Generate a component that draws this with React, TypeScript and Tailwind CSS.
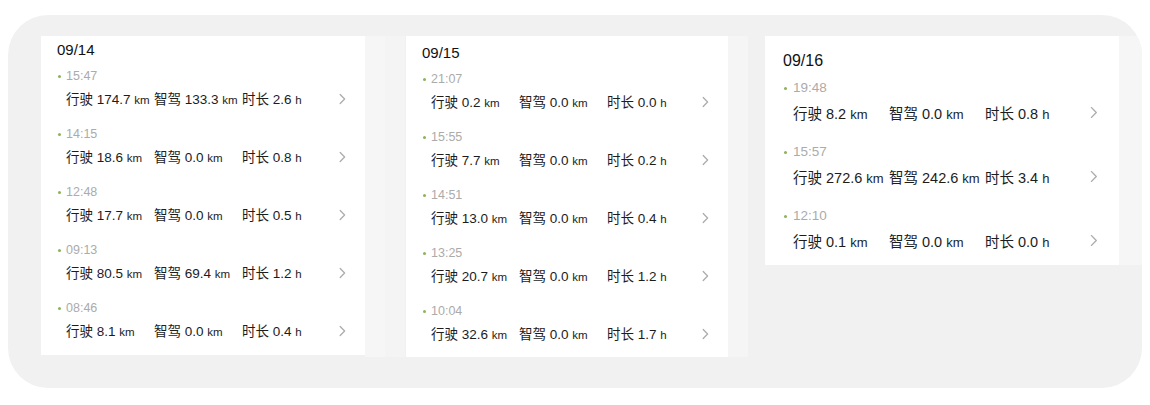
import React from "react";

type Trip = { t: string; d: string; s: string; h: string };

const day1: Trip[] = [
  { t: "15:47", d: "174.7", s: "133.3", h: "2.6" },
  { t: "14:15", d: "18.6", s: "0.0", h: "0.8" },
  { t: "12:48", d: "17.7", s: "0.0", h: "0.5" },
  { t: "09:13", d: "80.5", s: "69.4", h: "1.2" },
  { t: "08:46", d: "8.1", s: "0.0", h: "0.4" },
];
const day2: Trip[] = [
  { t: "21:07", d: "0.2", s: "0.0", h: "0.0" },
  { t: "15:55", d: "7.7", s: "0.0", h: "0.2" },
  { t: "14:51", d: "13.0", s: "0.0", h: "0.4" },
  { t: "13:25", d: "20.7", s: "0.0", h: "1.2" },
  { t: "10:04", d: "32.6", s: "0.0", h: "1.7" },
];
const day3: Trip[] = [
  { t: "19:48", d: "8.2", s: "0.0", h: "0.8" },
  { t: "15:57", d: "272.6", s: "242.6", h: "3.4" },
  { t: "12:10", d: "0.1", s: "0.0", h: "0.0" },
];

const FONT = { fontFamily: '"Liberation Sans", "Noto Sans CJK SC", sans-serif' };

function Chevron({ big }: { big?: boolean }) {
  return (
    <svg
      width={big ? 8 : 7}
      height={big ? 13 : 12}
      viewBox="0 0 7 12"
      className="shrink-0"
    >
      <polyline
        points="1.2,1.5 5.6,6 1.2,10.5"
        fill="none"
        stroke="#adadad"
        strokeWidth="1.3"
        strokeLinecap="round"
        strokeLinejoin="round"
      />
    </svg>
  );
}

function SmallCard({ date, trips, top }: { date: string; trips: Trip[]; top: "a" | "b" }) {
  return (
    <div
      className={
        top === "a"
          ? "w-[324px] bg-white pt-[4px] pb-[5px]"
          : "w-[322px] bg-white pt-[7px] pb-[4px]"
      }
    >
      <div className="h-[20px] leading-[20px] pl-[16px] text-[15px] text-[#111]">{date}</div>
      {trips.map((tr) => (
        <div key={tr.t} className="pt-[7px] pb-[8px]">
          <div className="flex h-[18px] items-center pl-[17px]">
            <span className="h-[3px] w-[3px] rounded-full bg-[#8db35f]" />
            <span className="ml-[5px] text-[12.5px] leading-[18px] text-[#ababab]">{tr.t}</span>
          </div>
          <div className="mt-[5px] flex h-[20px] items-center pl-[25px] pr-[19px] text-[13.5px] leading-[20px] text-[#1c1c1c]">
            <span className="w-[88px] shrink-0 whitespace-nowrap">
              行驶 {tr.d} <span className="text-[11.5px]">km</span>
            </span>
            <span className="w-[88px] shrink-0 whitespace-nowrap">
              智驾 {tr.s} <span className="text-[11.5px]">km</span>
            </span>
            <span className="w-[88px] shrink-0 whitespace-nowrap">
              时长 {tr.h} <span className="text-[11.5px]">h</span>
            </span>
            <span className="ml-auto -mt-[2px] flex">
              <Chevron />
            </span>
          </div>
        </div>
      ))}
    </div>
  );
}

function BigCard({ date, trips }: { date: string; trips: Trip[] }) {
  return (
    <div className="w-[354px] bg-white pt-[14px] pb-[1px]">
      <div className="h-[22px] leading-[22px] pl-[18px] text-[16px] text-[#111]">{date}</div>
      {trips.map((tr) => (
        <div key={tr.t} className="pt-[6px] pb-[11px]">
          <div className="flex h-[20px] items-center pl-[19px]">
            <span className="h-[3px] w-[3px] rounded-full bg-[#8db35f]" />
            <span className="ml-[6px] text-[13.5px] leading-[20px] text-[#ababab]">{tr.t}</span>
          </div>
          <div className="mt-[5px] flex h-[22px] items-center pl-[28px] pr-[21px] text-[14.5px] leading-[22px] text-[#1c1c1c]">
            <span className="w-[96px] shrink-0 whitespace-nowrap">
              行驶 {tr.d} <span className="text-[13px]">km</span>
            </span>
            <span className="w-[96px] shrink-0 whitespace-nowrap">
              智驾 {tr.s} <span className="text-[13px]">km</span>
            </span>
            <span className="w-[96px] shrink-0 whitespace-nowrap">
              时长 {tr.h} <span className="text-[13px]">h</span>
            </span>
            <span className="ml-auto -mt-[3px] flex">
              <Chevron big />
            </span>
          </div>
        </div>
      ))}
    </div>
  );
}

export default function App() {
  return (
    <div className="h-[405px] w-[1150px] bg-white pt-[15px]" style={FONT}>
      <div className="mx-[8px] flex h-[373px] items-start overflow-hidden rounded-[40px] bg-[#f1f1f1] pl-[33px] pt-[21px]">
        <div className="flex items-start">
          <SmallCard date="09/14" trips={day1} top="a" />
          <div className="h-[321px] w-[20px] bg-[#f6f6f6]" />
          <div className="h-[321px] w-[20px] bg-[#f4f4f4]" />
        </div>
        <div className="ml-[1px] flex items-start">
          <SmallCard date="09/15" trips={day2} top="b" />
          <div className="h-[321px] w-[20px] bg-[#f5f5f5]" />
        </div>
        <div className="ml-[17px] flex items-start">
          <BigCard date="09/16" trips={day3} />
          <div className="h-[229px] w-[30px] bg-[#f6f6f6]" />
        </div>
      </div>
    </div>
  );
}
